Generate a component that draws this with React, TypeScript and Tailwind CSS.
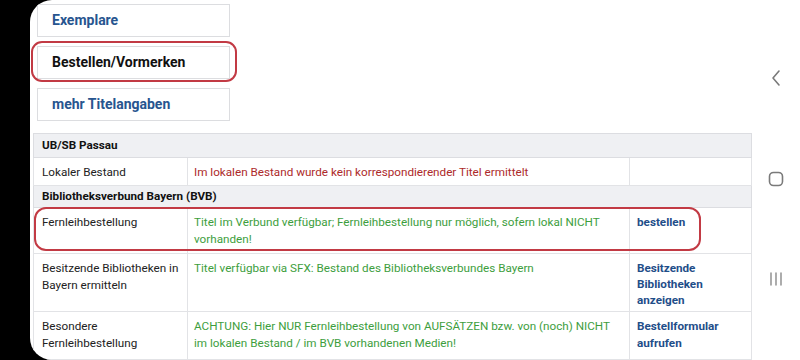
import React from "react";

const font = { fontFamily: "Roboto, 'Noto Sans', Arial, sans-serif" };

function NavBack() {
  return (
    <svg width="12" height="18" viewBox="0 0 12 18" fill="none">
      <path d="M9 2 L3 9 L9 16" stroke="#7a7a7a" strokeWidth="1.6" strokeLinecap="round" strokeLinejoin="round" />
    </svg>
  );
}
function NavHome() {
  return (
    <svg width="16" height="16" viewBox="0 0 16 16" fill="none">
      <rect x="1.5" y="1.5" width="13" height="13" rx="4" stroke="#7a7a7a" strokeWidth="1.6" />
    </svg>
  );
}
function NavRecent() {
  return (
    <svg width="14" height="16" viewBox="0 0 14 16" fill="none">
      <path d="M2 2 V14 M7 2 V14 M12 2 V14" stroke="#8a8a8a" strokeWidth="1.4" strokeLinecap="round" />
    </svg>
  );
}

function Btn({ children, dark }: { children: React.ReactNode; dark?: boolean }) {
  return (
    <div className="w-[193px] h-[33px] border border-[#dcdde0] bg-white flex items-center pl-[14px]">
      <span className={`text-[14px] font-bold ${dark ? "text-[#111]" : "text-[#27558f]"}`}>{children}</span>
    </div>
  );
}

const c1 = "border border-[#e2e3e6] pl-[8px] pr-[2px] pt-[6px] pb-0 align-top text-[#222]";
const c2g = "border border-[#e2e3e6] px-[6px] pt-[6px] pb-0 align-top text-[#3d9e3d]";
const c3 = "border border-[#e2e3e6] px-[7px] pt-[6px] pb-0 align-top font-bold text-[#1f4e89]";

export default function App() {
  return (
    <div className="w-[800px] h-[360px] bg-black flex overflow-hidden" style={font}>
      <div className="ml-[30px] flex-1 bg-white rounded-l-[22px] overflow-hidden flex relative">
        <div className="w-[722px] pl-[3px] pt-[4px] flex flex-col">
          <div className="flex flex-col gap-[9px] pl-[4px]">
            <Btn>Exemplare</Btn>
            <Btn dark>Bestellen/Vormerken</Btn>
            <Btn>mehr Titelangaben</Btn>
          </div>
          <table className="mt-[12px] w-[718px] border-collapse text-[11.7px] leading-[16.5px] table-fixed">
            <colgroup>
              <col className="w-[154px]" />
              <col className="w-[442px]" />
              <col className="w-[122px]" />
            </colgroup>
            <tbody>
              <tr className="bg-[#eff0f3] h-[24px]">
                <td colSpan={3} className="border border-[#dcdde1] px-[8px] p-0 align-middle font-bold text-[#111]">UB/SB Passau</td>
              </tr>
              <tr className="h-[28px]">
                <td className={c1}>Lokaler Bestand</td>
                <td className="border border-[#e2e3e6] px-[6px] pt-[6px] pb-0 align-top text-[#ad2a2a]">Im lokalen Bestand wurde kein korrespondierender Titel ermittelt</td>
                <td className={c3}></td>
              </tr>
              <tr className="bg-[#eff0f3] h-[22px]">
                <td colSpan={3} className="border border-[#dcdde1] px-[8px] p-0 align-middle font-bold text-[#111]">Bibliotheksverbund Bayern (BVB)</td>
              </tr>
              <tr className="h-[46px]">
                <td className={c1}>Fernleihbestellung</td>
                <td className={c2g}>Titel im Verbund verfügbar; Fernleihbestellung nur möglich, sofern lokal NICHT vorhanden!</td>
                <td className={c3}>bestellen</td>
              </tr>
              <tr className="h-[58px]">
                <td className={c1}>Besitzende Bibliotheken in Bayern ermitteln</td>
                <td className={c2g}>Titel verfügbar via SFX: Bestand des Bibliotheksverbundes Bayern</td>
                <td className={c3 + " leading-[16px]"}>Besitzende Bibliotheken anzeigen</td>
              </tr>
              <tr className="h-[48px]">
                <td className={c1}>Besondere Fernleihbestellung</td>
                <td className={c2g}>ACHTUNG: Hier NUR Fernleihbestellung von AUFSÄTZEN bzw. von (noch) NICHT im lokalen Bestand / im BVB vorhandenen Medien!</td>
                <td className={c3}>Bestellformular aufrufen</td>
              </tr>
            </tbody>
          </table>
        </div>
        <div className="flex-1 flex flex-col items-center pt-[69px] gap-[84px]">
          <NavBack />
          <NavHome />
          <NavRecent />
        </div>
        <div className="absolute left-[1px] top-[41px] w-[206px] h-[41px] border-2 border-[#c23a44] rounded-[11px] pointer-events-none" />
        <div className="absolute left-[4px] top-[207px] w-[667px] h-[44px] border-2 border-[#c23a44] rounded-[12px] pointer-events-none" />
      </div>
    </div>
  );
}
